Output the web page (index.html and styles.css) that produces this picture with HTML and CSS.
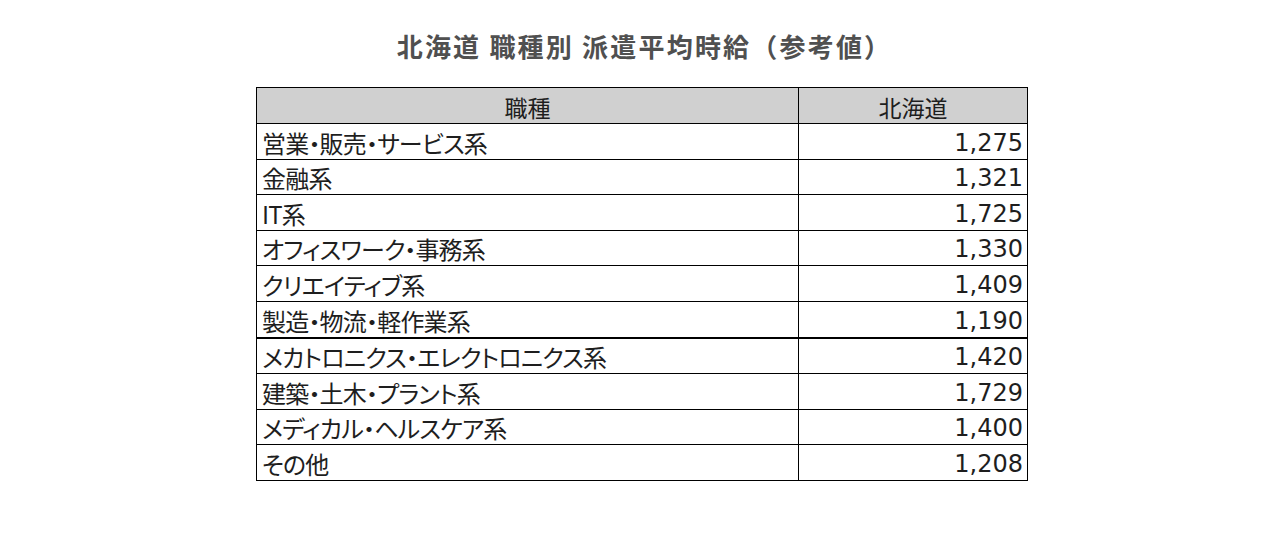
FILE: index.html
```html
<!DOCTYPE html>
<html lang="ja">
<head>
<meta charset="utf-8">
<link rel="stylesheet" href="styles.css">
</head>
<body>
<div class="page">
  <h1 class="title">北海道 職種別 派遣平均時給（参考値）</h1>
  <table class="wage">
    <thead>
      <tr><th class="c-job">職種</th><th class="c-val">北海道</th></tr>
    </thead>
    <tbody>
      <tr><td class="job">営業・販売・サービス系</td><td class="num">1,275</td></tr>
      <tr><td class="job">金融系</td><td class="num">1,321</td></tr>
      <tr><td class="job">IT系</td><td class="num">1,725</td></tr>
      <tr><td class="job">オフィスワーク・事務系</td><td class="num">1,330</td></tr>
      <tr><td class="job">クリエイティブ系</td><td class="num">1,409</td></tr>
      <tr><td class="job">製造・物流・軽作業系</td><td class="num">1,190</td></tr>
      <tr class="thick"><td class="job">メカトロニクス・エレクトロニクス系</td><td class="num">1,420</td></tr>
      <tr><td class="job">建築・土木・プラント系</td><td class="num">1,729</td></tr>
      <tr><td class="job">メディカル・ヘルスケア系</td><td class="num">1,400</td></tr>
      <tr><td class="job">その他</td><td class="num">1,208</td></tr>
    </tbody>
  </table>
</div>
</body>
</html>
```
FILE: styles.css
```css
html, body {
  margin: 0;
  padding: 0;
  background: #fff;
}
.page {
  width: 1285px;
  height: 542px;
  padding-top: 29px;
  box-sizing: border-box;
  font-family: "Noto Sans CJK JP", sans-serif;
  color: #1e1e1e;
}
.title {
  margin: 0 0 25px 0;
  height: 33px;
  line-height: 33px;
  text-align: center;
  font-size: 26px;
  font-weight: bold;
  letter-spacing: 2.2px;
  color: #505050;
  padding-left: 4px;
}
.wage {
  border-collapse: collapse;
  margin-left: 256px;
  width: 772px;
  table-layout: fixed;
}
.wage th, .wage td {
  border: 1px solid #000;
  padding: 0;
  height: 34.6px;
  font-weight: normal;
  font-size: 23px;
  vertical-align: bottom;
}
.wage th {
  background: #d0d0d0;
  text-align: center;
  line-height: 32px;
  height: 35px;
}
.c-job { width: 541px; }
.wage .job {
  padding-left: 5px;
  line-height: 32px;
  font-size: 24px;
  letter-spacing: -0.8px;
  font-feature-settings: "palt";
}
.wage .num {
  font-family: "DejaVu Sans", sans-serif;
  font-size: 24px;
  text-align: right;
  padding-right: 4px;
  line-height: 31px;
}
.wage tr.thick td {
  border-top: 2px solid #000;
}
```
